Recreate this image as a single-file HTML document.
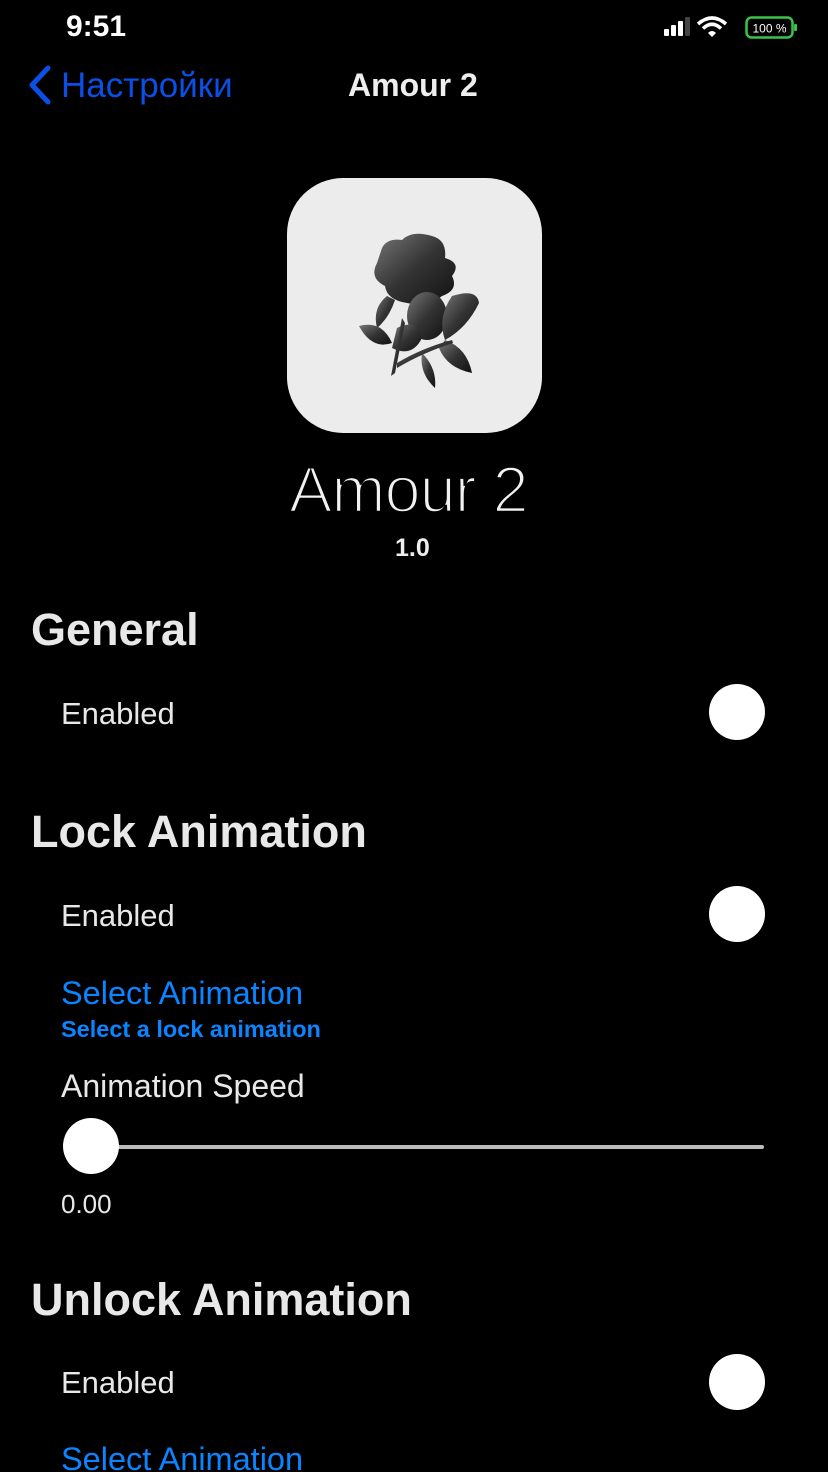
<!DOCTYPE html>
<html><head><meta charset="utf-8"><style>
html,body{margin:0;padding:0;background:#000;width:828px;height:1472px;overflow:hidden;position:relative;font-family:"Liberation Sans","Noto Sans CJK SC",sans-serif;color:#e8e8e8}
.t{position:absolute;line-height:1;white-space:nowrap}
.k{position:absolute;width:56px;height:56px;border-radius:50%;background:#fff}
.b{color:#0a84ff}
</style></head><body>
<div class="t" style="left:66px;top:12px;font-size:30px;font-weight:bold;color:#fff">9:51</div>
<svg style="position:absolute;left:664px;top:16px" width="140" height="24">
<rect x="0" y="13" width="5" height="7" rx="1" fill="#fff"/><rect x="7" y="9" width="5" height="11" rx="1" fill="#fff"/><rect x="14" y="5" width="5" height="15" rx="1" fill="#fff"/><rect x="21" y="1" width="5" height="19" rx="1" fill="#444"/>
<path d="M34 8 Q48 -4 62 8" stroke="#fff" stroke-width="3.5" fill="none"/><path d="M39 12.5 Q48 4 57 12.5" stroke="#fff" stroke-width="3.5" fill="none"/><path d="M44 17 L48 21 L52 17 Q48 13 44 17Z" fill="#fff"/>
<rect x="82.5" y="1.5" width="46" height="20" rx="5" fill="none" stroke="#3ac24a" stroke-width="2.5"/><rect x="130" y="8" width="3" height="7" rx="1" fill="#3ac24a"/>
<text x="105.5" y="16.5" font-size="12" fill="#fff" text-anchor="middle" font-family="Liberation Sans">100 %</text></svg>
<svg style="position:absolute;left:24px;top:64px" width="30" height="42"><path d="M24 4 L8 21 L24 38" stroke="#0a50e6" stroke-width="5" fill="none" stroke-linecap="round" stroke-linejoin="round"/></svg>
<div class="t" style="left:61px;top:68px;font-size:35px;color:#0a50e6">Настройки</div>
<div class="t" style="left:348px;top:69px;font-size:32px;font-weight:bold;color:#eee">Amour 2</div>
<div style="position:absolute;left:287px;top:178px;width:255px;height:255px;border-radius:56px;background:#ececec;overflow:hidden">
<svg width="255" height="255"><defs><linearGradient id="g" x1="0" y1="0" x2="1" y2="1"><stop offset="0" stop-color="#777"/><stop offset="0.5" stop-color="#333"/><stop offset="1" stop-color="#111"/></linearGradient></defs>
<g fill="url(#g)">
<path d="M95 70 Q100 60 115 62 Q125 52 145 58 Q160 62 158 80 Q175 85 165 98 Q172 112 155 118 Q140 130 120 125 Q100 122 98 108 Q82 100 90 85 Z"/>
<ellipse cx="140" cy="138" rx="20" ry="24"/>
<path d="M100 118 Q85 130 90 150 Q102 140 108 122Z"/>
<path d="M72 148 Q95 142 105 165 Q85 172 72 148Z"/>
<path d="M110 150 Q130 140 135 160 Q125 180 105 170Z"/>
<path d="M165 118 Q190 110 192 125 Q180 150 158 162 Q150 140 165 118Z"/>
<path d="M158 162 Q180 170 185 195 Q160 190 152 170Z"/>
<path d="M135 175 Q150 190 148 210 Q132 195 135 175Z"/>
<path d="M115 140 L118 145 L108 195 L104 198Z"/>
<path d="M110 185 Q135 170 165 162 L166 165 Q135 175 110 190Z"/>
</g></svg></div>
<div class="t" style="left:289px;top:457px;font-size:65px;letter-spacing:-1px;color:#f2f2f2;-webkit-text-stroke:2.5px #000">Amour 2</div>
<div class="t" style="left:395px;top:536px;font-size:25px;font-weight:bold;color:#eee">1.0</div>
<div class="t" style="left:31px;top:607px;font-size:45px;font-weight:bold">General</div>
<div class="t" style="left:61px;top:698px;font-size:31px">Enabled</div>
<div class="k" style="left:709px;top:684px"></div>
<div class="t" style="left:31px;top:809px;font-size:45px;font-weight:bold">Lock Animation</div>
<div class="t" style="left:61px;top:900px;font-size:31px">Enabled</div>
<div class="k" style="left:709px;top:886px"></div>
<div class="t b" style="left:61px;top:977px;font-size:32.5px">Select Animation</div>
<div class="t b" style="left:61px;top:1018px;font-size:23.5px;font-weight:bold">Select a lock animation</div>
<div class="t" style="left:61px;top:1070px;font-size:32px">Animation Speed</div>
<div style="position:absolute;left:91px;top:1145px;width:673px;height:4px;border-radius:2px;background:#bbb"></div>
<div class="k" style="left:63px;top:1118px"></div>
<div class="t" style="left:61px;top:1191px;font-size:26px">0.00</div>
<div class="t" style="left:31px;top:1277px;font-size:45px;font-weight:bold">Unlock Animation</div>
<div class="t" style="left:61px;top:1367px;font-size:31px">Enabled</div>
<div class="k" style="left:709px;top:1354px"></div>
<div class="t b" style="left:61px;top:1443px;font-size:32.5px">Select Animation</div>
</body></html>
